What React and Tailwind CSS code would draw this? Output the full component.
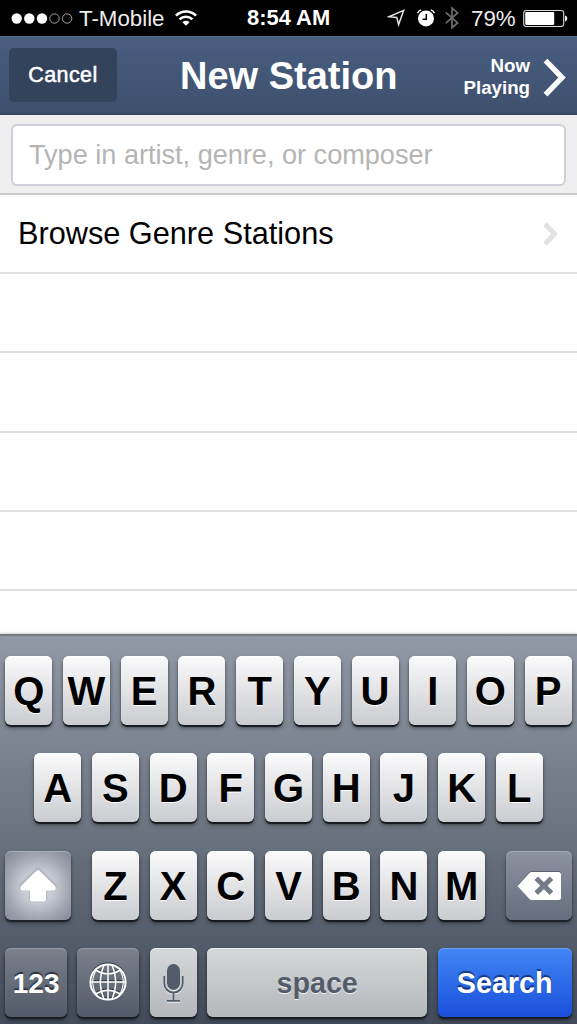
import { useState } from 'react'

const LETTER_ROWS = ['QWERTYUIOP', 'ASDFGHJKL', 'ZXCVBNM']

const EMPTY_ROWS = ['h-[79px]', 'h-[80px]', 'h-[79px]', 'h-[79px]']

function SignalDots() {
  return (
    <svg width="62" height="12" viewBox="0 0 62 12" className="shrink-0">
      <circle cx="5.7" cy="6.5" r="5.2" fill="#fff" />
      <circle cx="18.3" cy="6.5" r="5.2" fill="#fff" />
      <circle cx="31" cy="6.5" r="5.2" fill="#fff" />
      <circle cx="43.5" cy="6.5" r="4.7" fill="none" stroke="#b5b5b5" strokeWidth="0.9" />
      <circle cx="56.1" cy="6.5" r="4.7" fill="none" stroke="#b5b5b5" strokeWidth="0.9" />
    </svg>
  )
}

function WifiIcon() {
  return (
    <svg width="22" height="16" viewBox="0 0 22 16" fill="none" stroke="#fff" strokeWidth="2.5" className="shrink-0">
      <path d="M0.9 5.7a14.3 14.3 0 0 1 20.2 0" />
      <path d="M4.6 9.4a9 9 0 0 1 12.8 0" />
      <path d="M11 15.8L7.4 12.2a5.1 5.1 0 0 1 7.2 0z" fill="#fff" stroke="none" />
    </svg>
  )
}

function LocationIcon() {
  return (
    <svg width="19" height="18" viewBox="0 0 19 18" fill="none" stroke="#e4e4e4" strokeWidth="1.5" className="shrink-0">
      <path d="M16.7 1.4L2 7.7L9.800 8.500L11.600 15.600z" />
    </svg>
  )
}

function AlarmIcon() {
  return (
    <svg width="18" height="18" viewBox="0 0 18 18" fill="none" className="shrink-0">
      <circle cx="9" cy="9.4" r="8" fill="#fff" />
      <path d="M9.3 5v5.2H5.6" stroke="#000" strokeWidth="1.5" />
      <path d="M0.6 4.2C1.2 2.6 2.4 1.3 4.2 0.8M17.4 4.2C16.8 2.6 15.6 1.3 13.8 0.8" stroke="#fff" strokeWidth="1.4" />
    </svg>
  )
}

function BluetoothIcon() {
  return (
    <svg width="14" height="24" viewBox="0 0 14 24" fill="none" stroke="#6d6d6d" strokeWidth="1.7" className="shrink-0">
      <path d="M0.8 6.3L12.6 16.9L7 21.6V2L12.6 6.9L0.8 17.2" />
    </svg>
  )
}

function BatteryIcon() {
  return (
    <svg width="45" height="18" viewBox="0 0 45 18" className="shrink-0">
      <rect x="0.7" y="1.5" width="40" height="16" rx="2.5" fill="none" stroke="#d8d8d8" strokeWidth="1.1" />
      <rect x="2.2" y="3.1" width="29" height="12.8" rx="0.8" fill="#fff" />
      <path d="M42 6.5v6c1.4-.4 2.3-1.6 2.3-3s-.9-2.6-2.3-3z" fill="#fff" />
    </svg>
  )
}

function StatusBar() {
  return (
    <div className="flex h-9 items-center bg-black text-[22px] text-white">
      <div className="flex w-[247px] items-center pl-[11px]">
        <SignalDots />
        <span className="ml-[6px] w-[86px] pt-[2px] text-[22.3px] text-[#ececec]">T-Mobile</span>
        <span className="ml-[10px]">
          <WifiIcon />
        </span>
      </div>
      <div className="w-[84px] text-[21.9px] font-bold whitespace-nowrap">8:54 AM</div>
      <div className="flex flex-1 items-center pl-[56px]">
        <LocationIcon />
        <span className="ml-[11px]">
          <AlarmIcon />
        </span>
        <span className="ml-[10px]">
          <BluetoothIcon />
        </span>
        <span className="ml-[12px] w-[45px] pt-[2px] text-[22.3px] text-[#ececec]">79%</span>
        <span className="ml-[7px]">
          <BatteryIcon />
        </span>
      </div>
    </div>
  )
}

function NavBar() {
  return (
    <header className="flex h-[79px] items-center border-t border-b-2 border-t-[#5a6c8b] border-b-[#334866] bg-linear-to-b from-[#485d80] to-[#3e506d] pl-[9px] text-white">
      <button className="h-[54px] w-[108px] rounded-[5px] bg-[#33435c] text-[21.5px] leading-[54px] tracking-[0.4px] [-webkit-text-stroke:0.5px_white]">
        Cancel
      </button>
      <h1 className="ml-[63px] w-[220px] pt-[2px] text-[38px] font-bold whitespace-nowrap">New Station</h1>
      <button className="ml-auto flex items-center pr-[10px]">
        <span className="pt-[3px] text-right text-[18.7px] leading-[22px] font-bold">
          Now
          <br />
          Playing
        </span>
        <svg width="24" height="40" viewBox="0 0 24 40" fill="none" stroke="#fff" strokeWidth="5.4" className="mt-[5px] ml-[13px]">
          <path d="M2.5 2.5L19 19.6L2.5 36.7" />
        </svg>
      </button>
    </header>
  )
}

function Key({ children, className = '' }) {
  return (
    <button
      className={`flex h-[69px] shrink-0 items-center justify-center rounded-[6px] pt-[2px] font-bold ${className}`}
    >
      {children}
    </button>
  )
}

function LetterKey({ letter, onPress }) {
  return (
    <button
      onClick={() => onPress(letter)}
      className="flex h-[69px] w-[47px] shrink-0 items-center justify-center rounded-[6px] bg-linear-to-b from-[#fbfbfc] to-[#cbccd0] pt-[1px] text-[40px] font-bold text-black shadow-[0_2px_1px_#15181d,0_3px_4px_rgba(0,0,0,0.4),inset_0_1px_0_white] [text-shadow:0_1px_0_white]"
    >
      {letter}
    </button>
  )
}

function ShiftIcon() {
  return (
    <svg width="38" height="34" viewBox="0 0 38 34" className="drop-shadow-[0_-1px_1px_rgba(80,90,110,0.5)]">
      <path
        d="M17.5 1.5Q19 0 20.5 1.5L36.3 17.2Q37.8 21.4 34 21.5H27V30Q27 32.5 24.5 32.5H13.5Q11 32.5 11 30V21.5H4Q0.2 21.4 1.7 17.2Z"
        fill="#fff"
      />
    </svg>
  )
}

function DeleteIcon() {
  return (
    <svg width="45" height="30" viewBox="0 0 45 30" className="drop-shadow-[0_-1px_0_rgba(60,70,90,0.6)]">
      <path d="M14.5 1H41.5Q44 1 44 3.5V26.5Q44 29 41.5 29H14.5Q13.5 29 12.5 28L0.5 15L12.5 2Q13.5 1 14.5 1Z" fill="#fff" />
      <path d="M19.2 7.2L34.5 22.1M34.5 7.2L19.2 22.1" stroke="#747b8b" strokeWidth="5" />
    </svg>
  )
}

function GlobeIcon() {
  return (
    <svg width="38" height="38" viewBox="0 0 38 38" fill="none" stroke="#fff" strokeWidth="1.6" className="-mt-[4px] drop-shadow-[0_-1px_0_rgba(35,42,55,0.9)]">
      <circle cx="19" cy="19" r="17.6" strokeWidth="2" />
      <path d="M19 1.2V36.8M1.2 19H36.8" />
      <path d="M15 1.8Q7.500 19 15 36.200M23 1.800Q30.500 19 23 36.200" />
      <path d="M6.500 7Q19 14.500 31.500 7M6.500 31Q19 23.500 31.500 31" />
      <path d="M8 5.5Q-0.5 19 8 32.5M30 5.5Q38.5 19 30 32.5" strokeWidth="1.2" />
    </svg>
  )
}

function MicIcon() {
  return (
    <svg width="22" height="40" viewBox="0 0 22 40" fill="none" stroke="#525c6a" strokeWidth="1.8" className="-mt-[2px] drop-shadow-[0_1px_0_rgba(255,255,255,0.8)]">
      <rect x="5" y="1" width="13" height="26" rx="6.500" fill="#525c6a" stroke="none" />
      <path d="M2.300 13V20.500a9.200 9.200 0 0 0 18.400 0V13" />
      <path d="M11.500 30V37.500M5 37.900H18" />
    </svg>
  )
}

function Keyboard({ onKey }) {
  return (
    <div className="flex h-[390px] flex-col gap-y-[28.4px] border-t-2 border-[#777a7e] bg-linear-to-b from-[#9199a6] from-0% via-[#69737f] via-52% to-[#414b5a] to-100% px-[5.3px] pt-[20px] shadow-[0_-1px_2px_rgba(0,0,0,0.2)]">
      <div className="flex justify-between">
        {LETTER_ROWS[0].split('').map((l) => (
          <LetterKey key={l} letter={l} onPress={onKey} />
        ))}
      </div>

      <div className="flex justify-between px-[28.9px]">
        {LETTER_ROWS[1].split('').map((l) => (
          <LetterKey key={l} letter={l} onPress={onKey} />
        ))}
      </div>

      <div className="flex justify-between">
        <Key className="w-[65.4px] bg-[radial-gradient(circle_at_50%_52%,#dfe1e7_0%,#c6c9d2_35%,#a0a5b1_65%,#7f8694_100%)] shadow-[0_2px_1px_#1d222a,0_3px_4px_rgba(0,0,0,0.4),inset_0_1px_0_#a9aeb8]">
          <ShiftIcon />
        </Key>
        <div className="flex gap-[10.7px]">
          {LETTER_ROWS[2].split('').map((l) => (
            <LetterKey key={l} letter={l} onPress={onKey} />
          ))}
        </div>
        <Key className="w-[65.4px] bg-linear-to-b from-[#8c92a0] to-[#666f7f] shadow-[0_2px_1px_#1d222a,0_3px_4px_rgba(0,0,0,0.4),inset_0_1px_0_#a5abb6]">
          <DeleteIcon />
        </Key>
      </div>

      <div className="flex justify-between">
        <Key className="w-[61.6px] bg-linear-to-b from-[#7a808c] to-[#525b6a] text-[28px] text-white shadow-[0_2px_1px_#171b22,0_3px_4px_rgba(0,0,0,0.4),inset_0_1px_0_#979ca6] [text-shadow:0_-2px_1px_rgba(30,36,48,0.8)]">
          123
        </Key>
        <Key className="w-[61.6px] bg-linear-to-b from-[#7a808c] to-[#525b6a] shadow-[0_2px_1px_#171b22,0_3px_4px_rgba(0,0,0,0.4),inset_0_1px_0_#979ca6]">
          <GlobeIcon />
        </Key>
        <Key className="w-[47px] bg-linear-to-b from-[#d5d8d9] to-[#b6b7bb] shadow-[0_2px_1px_#171b22,0_3px_4px_rgba(0,0,0,0.4),inset_0_1px_0_#eceeee]">
          <MicIcon />
        </Key>
        <Key className="w-[220px] bg-linear-to-b from-[#d5d8d9] to-[#b6b7bb] text-[28.7px] text-[#525c6a] shadow-[0_2px_1px_#171b22,0_3px_4px_rgba(0,0,0,0.4),inset_0_1px_0_#eceeee] [text-shadow:0_1px_0_rgba(255,255,255,0.8)]">
          space
        </Key>
        <Key className="w-[134px] bg-linear-to-b from-[#4286f5] to-[#1b4edb] text-[28.7px] text-white shadow-[0_2px_1px_#171b22,0_3px_4px_rgba(0,0,0,0.4),inset_0_1px_0_#6a9ff0] [text-shadow:0_-2px_1px_rgba(16,40,100,0.8)]">
          Search
        </Key>
      </div>
    </div>
  )
}

export default function App() {
  const [query, setQuery] = useState('')

  return (
    <div className="flex h-[1024px] w-[577px] flex-col overflow-hidden bg-white font-['Liberation_Sans',Arial,sans-serif]">
      <StatusBar />
      <NavBar />

      <div className="h-20 border-b-2 border-[#cbcbcc] bg-[#efefef] px-[11px] pt-[9px]">
        <input
          type="text"
          value={query}
          onChange={(e) => setQuery(e.target.value)}
          placeholder="Type in artist, genre, or composer"
          className="block h-[62px] w-full rounded-[6px] border-2 border-[#cdd0da] bg-white px-4 pb-[1px] text-[27.1px] placeholder:text-[#b5b5b5] focus:outline-none"
        />
      </div>

      <main className="flex-1 bg-white">
        <div className="flex h-[79px] items-center justify-between border-b-2 border-[#e0e0e2] pr-[17px] pl-[18px]">
          <span className="pt-[1px] text-[30.7px] text-black">Browse Genre Stations</span>
          <svg width="18" height="24" viewBox="0 0 18 24" fill="none" stroke="#e2e2e5" strokeWidth="5">
            <path d="M3 2L12.5 12L3 22" />
          </svg>
        </div>
        {EMPTY_ROWS.map((height, i) => (
          <div key={i} className={`${height} border-b-2 border-[#e0e0e2]`}></div>
        ))}
      </main>

      <Keyboard onKey={(letter) => setQuery(query + letter)} />
    </div>
  )
}
